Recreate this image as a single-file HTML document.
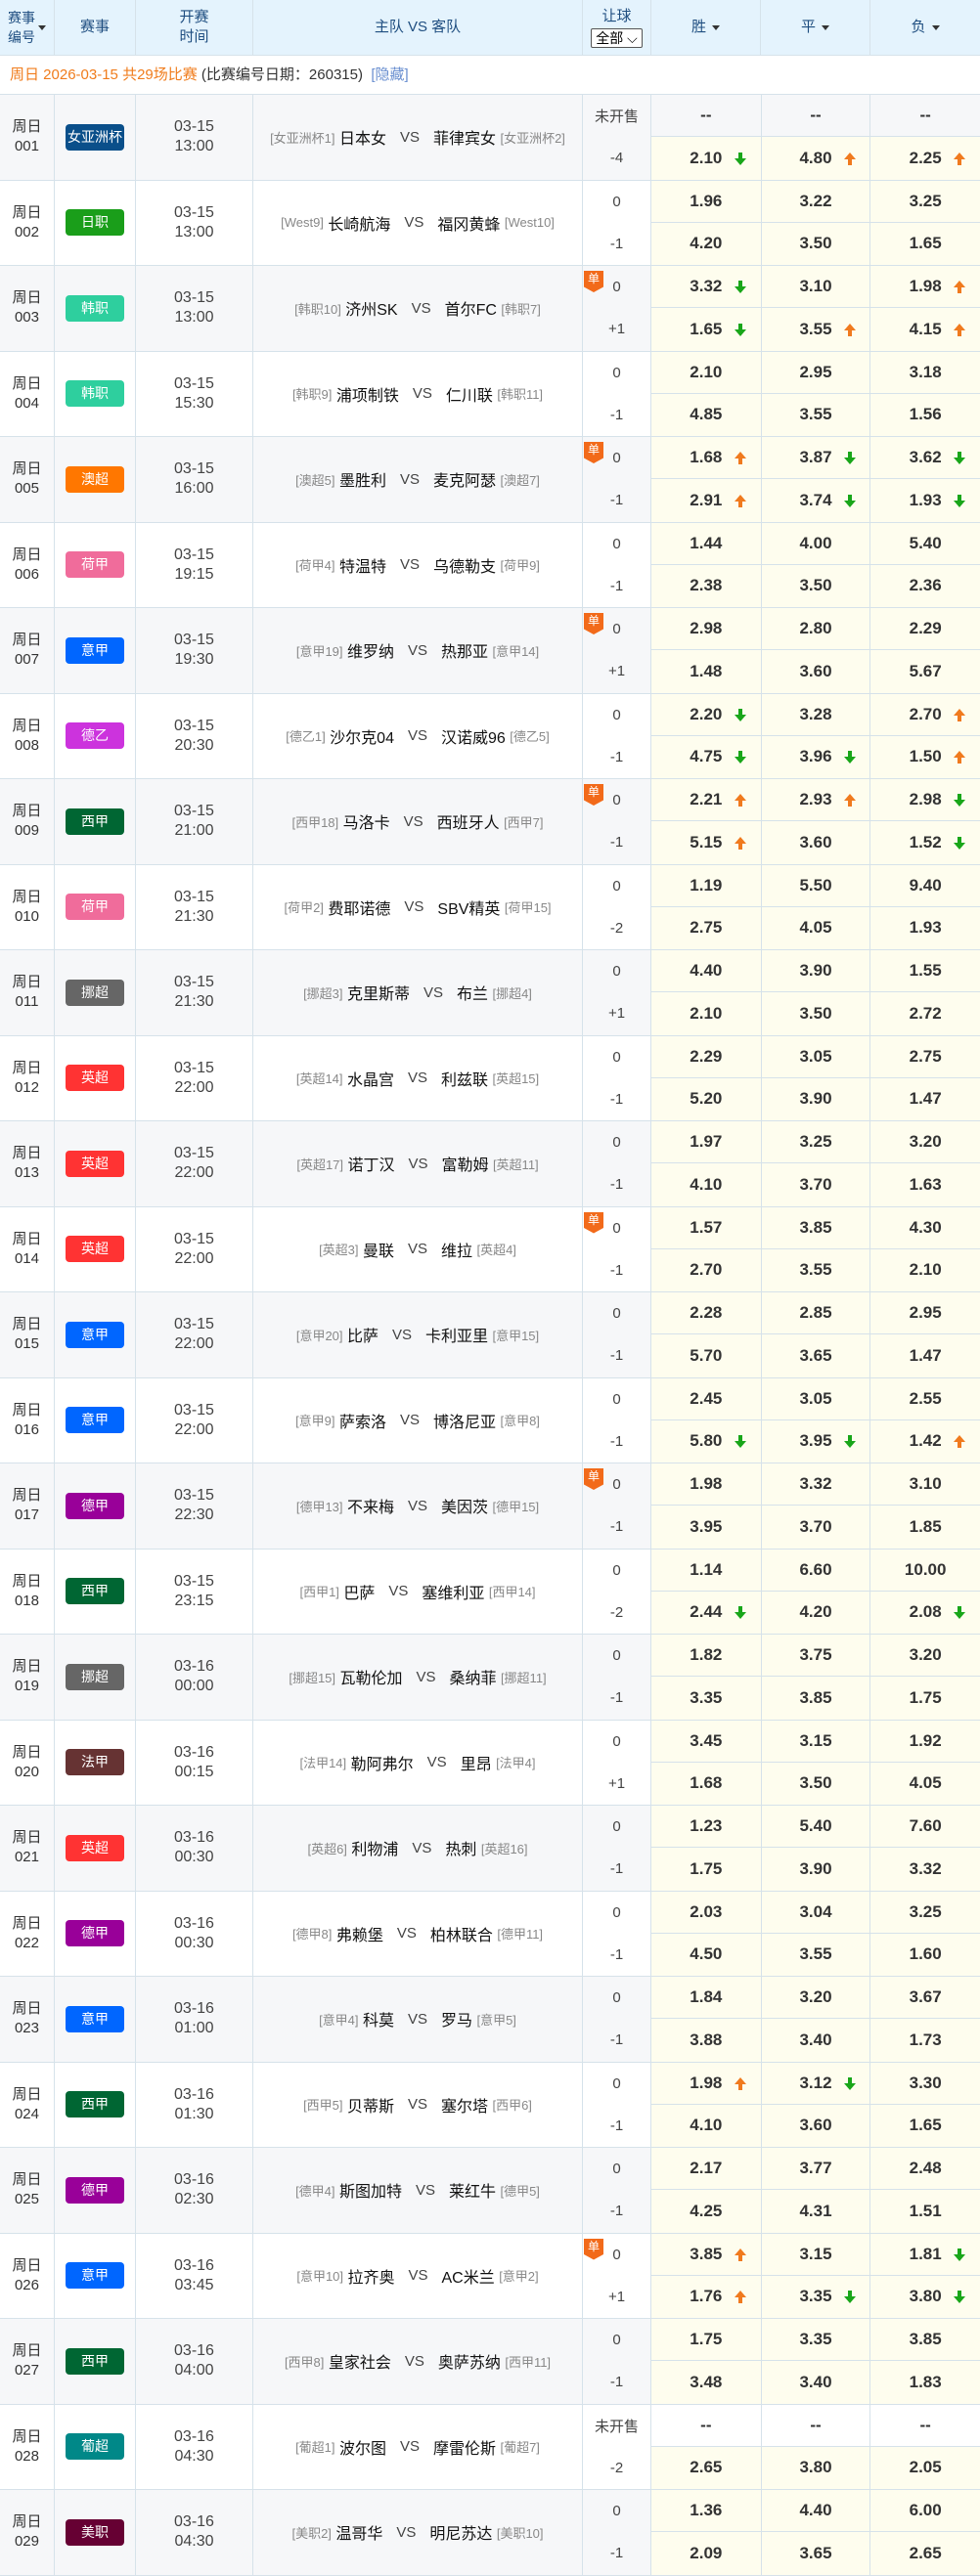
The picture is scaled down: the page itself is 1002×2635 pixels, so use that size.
<!DOCTYPE html>
<html><head><meta charset="utf-8">
<style>
*{box-sizing:border-box;margin:0;padding:0}
body{width:1002px;height:2635px;background:#fff;font-family:"Liberation Sans","Noto Sans CJK SC",sans-serif;color:#333;overflow:hidden}
.hd{display:flex;height:57px;background:#e4f3fd;color:#1f4e80;font-size:15px;border-bottom:1px solid #d6e2ea}
.hd>div{border-left:1px solid #d6e2ea;display:flex;align-items:center;justify-content:center;text-align:center;line-height:20px}
.hd>div:first-child{border-left:none}
.tri{display:inline-block;width:0;height:0;border-left:4px solid transparent;border-right:4px solid transparent;border-top:5px solid #333;margin-left:6px;vertical-align:middle}
.sel{display:inline-block;border:1px solid #555;border-radius:2px;background:#fff;color:#000;font-size:14px;line-height:18px;padding:0 4px;margin-top:2px}
.info{height:40px;border-bottom:1px solid #d6e2ea;font-size:15px;line-height:40px;padding-left:10px}
.m{display:flex;height:87.5px;border-bottom:1px solid #d6e2ea;background:#fff}
.m.g{background:#f6f7f9}
.m>div{border-left:1px solid #d6e2ea}
.m>div:first-child{border-left:none}
.c1{width:55px;display:flex;align-items:center;justify-content:center;text-align:center;font-size:15px;line-height:20px;color:#333}
.c2{width:83px;display:flex;align-items:center;justify-content:center}
.b{display:inline-block;width:60px;height:27px;line-height:27px;border-radius:4px;color:#fff;font-size:14px;text-align:center}
.c3{width:120px;display:flex;align-items:center;justify-content:center;text-align:center;font-size:16px;line-height:20px;color:#444}
.c4{width:337px;display:flex;align-items:center;justify-content:center;font-size:16px;color:#111;white-space:nowrap}
.c4 i{font-style:normal;color:#888;font-size:13px}
.c4 s{text-decoration:none;color:#444;font-size:15px;margin:0 14px}
.c5{width:70px;position:relative;font-size:15px;color:#444}
.c5>div{height:50%;display:flex;align-items:center;justify-content:center}
.dan{position:absolute;left:1px;top:5px;width:20px;height:22px;background:#f26a1a;color:#fff;font-size:12px;text-align:center;line-height:17px;clip-path:polygon(0 0,100% 0,100% 75%,50% 100%,0 75%)}
.o{width:337px;border-left:1px solid #d6e2ea}
.o>div{height:50%;display:flex;background:#fefdee}
.o>div:first-child{border-bottom:1px solid #d6e2ea}
.o>div.d{background:transparent}
.o b{position:relative;display:flex;align-items:center;justify-content:center;width:112px;font-size:17px;color:#333;border-left:1px solid #d6e2ea}
.o b:first-child{border-left:none}
.o b:last-child{width:113px}
.up,.dn{position:absolute;left:calc(50% + 29px);top:50%;width:12px;height:13px;margin-top:-6px}
.up::before,.dn::before{content:"";position:absolute;left:4px;width:4px;height:7px}
.up::after,.dn::after{content:"";position:absolute;left:0;width:0;height:0;border-left:6px solid transparent;border-right:6px solid transparent}
.dn::before{top:0;background:#19a619}.dn::after{top:6px;border-top:7px solid #19a619}
.up::before{bottom:0;background:#f07a1e}.up::after{bottom:6px;border-bottom:7px solid #f07a1e}
</style></head><body>
<div class="hd">
<div style="width:55px;font-size:14px"><span>赛事<br>编号</span><span class="tri" style="margin-left:3px"></span></div>
<div style="width:83px">赛事</div>
<div style="width:120px">开赛<br>时间</div>
<div style="width:337px">主队 VS 客队</div>
<div style="width:70px;flex-direction:column"><span>让球</span><span class="sel">全部 ⌵</span></div>
<div style="width:112px">胜<span class="tri"></span></div>
<div style="width:112px">平<span class="tri"></span></div>
<div style="width:113px">负<span class="tri"></span></div>
</div>
<div class="info"><span style="color:#f07c1c">周日 2026-03-15 共29场比赛</span> (比赛编号日期：260315) &nbsp;<span style="color:#6a8fd0">[隐藏]</span></div>

<div class="m g"><div class="c1">周日<br>001</div><div class="c2"><span class="b" style="background:#0a4f8a">女亚洲杯</span></div><div class="c3">03-15<br>13:00</div><div class="c4"><i>[女亚洲杯1]</i>&nbsp;日本女<s>VS</s>菲律宾女&nbsp;<i>[女亚洲杯2]</i></div><div class="c5"><div>未开售</div><div>-4</div></div><div class="o"><div class="d"><b>--</b><b>--</b><b>--</b></div><div><b>2.10<u class="dn"></u></b><b>4.80<u class="up"></u></b><b>2.25<u class="up"></u></b></div></div></div>

<div class="m"><div class="c1">周日<br>002</div><div class="c2"><span class="b" style="background:#1a9e1a">日职</span></div><div class="c3">03-15<br>13:00</div><div class="c4"><i>[West9]</i>&nbsp;长崎航海<s>VS</s>福冈黄蜂&nbsp;<i>[West10]</i></div><div class="c5"><div>0</div><div>-1</div></div><div class="o"><div><b>1.96</b><b>3.22</b><b>3.25</b></div><div><b>4.20</b><b>3.50</b><b>1.65</b></div></div></div>

<div class="m g"><div class="c1">周日<br>003</div><div class="c2"><span class="b" style="background:#2ecf9e">韩职</span></div><div class="c3">03-15<br>13:00</div><div class="c4"><i>[韩职10]</i>&nbsp;济州SK<s>VS</s>首尔FC&nbsp;<i>[韩职7]</i></div><div class="c5"><span class="dan">单</span><div>0</div><div>+1</div></div><div class="o"><div><b>3.32<u class="dn"></u></b><b>3.10</b><b>1.98<u class="up"></u></b></div><div><b>1.65<u class="dn"></u></b><b>3.55<u class="up"></u></b><b>4.15<u class="up"></u></b></div></div></div>

<div class="m"><div class="c1">周日<br>004</div><div class="c2"><span class="b" style="background:#2ecf9e">韩职</span></div><div class="c3">03-15<br>15:30</div><div class="c4"><i>[韩职9]</i>&nbsp;浦项制铁<s>VS</s>仁川联&nbsp;<i>[韩职11]</i></div><div class="c5"><div>0</div><div>-1</div></div><div class="o"><div><b>2.10</b><b>2.95</b><b>3.18</b></div><div><b>4.85</b><b>3.55</b><b>1.56</b></div></div></div>

<div class="m g"><div class="c1">周日<br>005</div><div class="c2"><span class="b" style="background:#ff7700">澳超</span></div><div class="c3">03-15<br>16:00</div><div class="c4"><i>[澳超5]</i>&nbsp;墨胜利<s>VS</s>麦克阿瑟&nbsp;<i>[澳超7]</i></div><div class="c5"><span class="dan">单</span><div>0</div><div>-1</div></div><div class="o"><div><b>1.68<u class="up"></u></b><b>3.87<u class="dn"></u></b><b>3.62<u class="dn"></u></b></div><div><b>2.91<u class="up"></u></b><b>3.74<u class="dn"></u></b><b>1.93<u class="dn"></u></b></div></div></div>

<div class="m"><div class="c1">周日<br>006</div><div class="c2"><span class="b" style="background:#f06c9b">荷甲</span></div><div class="c3">03-15<br>19:15</div><div class="c4"><i>[荷甲4]</i>&nbsp;特温特<s>VS</s>乌德勒支&nbsp;<i>[荷甲9]</i></div><div class="c5"><div>0</div><div>-1</div></div><div class="o"><div><b>1.44</b><b>4.00</b><b>5.40</b></div><div><b>2.38</b><b>3.50</b><b>2.36</b></div></div></div>

<div class="m g"><div class="c1">周日<br>007</div><div class="c2"><span class="b" style="background:#0066ff">意甲</span></div><div class="c3">03-15<br>19:30</div><div class="c4"><i>[意甲19]</i>&nbsp;维罗纳<s>VS</s>热那亚&nbsp;<i>[意甲14]</i></div><div class="c5"><span class="dan">单</span><div>0</div><div>+1</div></div><div class="o"><div><b>2.98</b><b>2.80</b><b>2.29</b></div><div><b>1.48</b><b>3.60</b><b>5.67</b></div></div></div>

<div class="m"><div class="c1">周日<br>008</div><div class="c2"><span class="b" style="background:#cc33dd">德乙</span></div><div class="c3">03-15<br>20:30</div><div class="c4"><i>[德乙1]</i>&nbsp;沙尔克04<s>VS</s>汉诺威96&nbsp;<i>[德乙5]</i></div><div class="c5"><div>0</div><div>-1</div></div><div class="o"><div><b>2.20<u class="dn"></u></b><b>3.28</b><b>2.70<u class="up"></u></b></div><div><b>4.75<u class="dn"></u></b><b>3.96<u class="dn"></u></b><b>1.50<u class="up"></u></b></div></div></div>

<div class="m g"><div class="c1">周日<br>009</div><div class="c2"><span class="b" style="background:#006633">西甲</span></div><div class="c3">03-15<br>21:00</div><div class="c4"><i>[西甲18]</i>&nbsp;马洛卡<s>VS</s>西班牙人&nbsp;<i>[西甲7]</i></div><div class="c5"><span class="dan">单</span><div>0</div><div>-1</div></div><div class="o"><div><b>2.21<u class="up"></u></b><b>2.93<u class="up"></u></b><b>2.98<u class="dn"></u></b></div><div><b>5.15<u class="up"></u></b><b>3.60</b><b>1.52<u class="dn"></u></b></div></div></div>

<div class="m"><div class="c1">周日<br>010</div><div class="c2"><span class="b" style="background:#f06c9b">荷甲</span></div><div class="c3">03-15<br>21:30</div><div class="c4"><i>[荷甲2]</i>&nbsp;费耶诺德<s>VS</s>SBV精英&nbsp;<i>[荷甲15]</i></div><div class="c5"><div>0</div><div>-2</div></div><div class="o"><div><b>1.19</b><b>5.50</b><b>9.40</b></div><div><b>2.75</b><b>4.05</b><b>1.93</b></div></div></div>

<div class="m g"><div class="c1">周日<br>011</div><div class="c2"><span class="b" style="background:#666">挪超</span></div><div class="c3">03-15<br>21:30</div><div class="c4"><i>[挪超3]</i>&nbsp;克里斯蒂<s>VS</s>布兰&nbsp;<i>[挪超4]</i></div><div class="c5"><div>0</div><div>+1</div></div><div class="o"><div><b>4.40</b><b>3.90</b><b>1.55</b></div><div><b>2.10</b><b>3.50</b><b>2.72</b></div></div></div>

<div class="m"><div class="c1">周日<br>012</div><div class="c2"><span class="b" style="background:#ff3333">英超</span></div><div class="c3">03-15<br>22:00</div><div class="c4"><i>[英超14]</i>&nbsp;水晶宫<s>VS</s>利兹联&nbsp;<i>[英超15]</i></div><div class="c5"><div>0</div><div>-1</div></div><div class="o"><div><b>2.29</b><b>3.05</b><b>2.75</b></div><div><b>5.20</b><b>3.90</b><b>1.47</b></div></div></div>

<div class="m g"><div class="c1">周日<br>013</div><div class="c2"><span class="b" style="background:#ff3333">英超</span></div><div class="c3">03-15<br>22:00</div><div class="c4"><i>[英超17]</i>&nbsp;诺丁汉<s>VS</s>富勒姆&nbsp;<i>[英超11]</i></div><div class="c5"><div>0</div><div>-1</div></div><div class="o"><div><b>1.97</b><b>3.25</b><b>3.20</b></div><div><b>4.10</b><b>3.70</b><b>1.63</b></div></div></div>

<div class="m"><div class="c1">周日<br>014</div><div class="c2"><span class="b" style="background:#ff3333">英超</span></div><div class="c3">03-15<br>22:00</div><div class="c4"><i>[英超3]</i>&nbsp;曼联<s>VS</s>维拉&nbsp;<i>[英超4]</i></div><div class="c5"><span class="dan">单</span><div>0</div><div>-1</div></div><div class="o"><div><b>1.57</b><b>3.85</b><b>4.30</b></div><div><b>2.70</b><b>3.55</b><b>2.10</b></div></div></div>

<div class="m g"><div class="c1">周日<br>015</div><div class="c2"><span class="b" style="background:#0066ff">意甲</span></div><div class="c3">03-15<br>22:00</div><div class="c4"><i>[意甲20]</i>&nbsp;比萨<s>VS</s>卡利亚里&nbsp;<i>[意甲15]</i></div><div class="c5"><div>0</div><div>-1</div></div><div class="o"><div><b>2.28</b><b>2.85</b><b>2.95</b></div><div><b>5.70</b><b>3.65</b><b>1.47</b></div></div></div>

<div class="m"><div class="c1">周日<br>016</div><div class="c2"><span class="b" style="background:#0066ff">意甲</span></div><div class="c3">03-15<br>22:00</div><div class="c4"><i>[意甲9]</i>&nbsp;萨索洛<s>VS</s>博洛尼亚&nbsp;<i>[意甲8]</i></div><div class="c5"><div>0</div><div>-1</div></div><div class="o"><div><b>2.45</b><b>3.05</b><b>2.55</b></div><div><b>5.80<u class="dn"></u></b><b>3.95<u class="dn"></u></b><b>1.42<u class="up"></u></b></div></div></div>

<div class="m g"><div class="c1">周日<br>017</div><div class="c2"><span class="b" style="background:#990099">德甲</span></div><div class="c3">03-15<br>22:30</div><div class="c4"><i>[德甲13]</i>&nbsp;不来梅<s>VS</s>美因茨&nbsp;<i>[德甲15]</i></div><div class="c5"><span class="dan">单</span><div>0</div><div>-1</div></div><div class="o"><div><b>1.98</b><b>3.32</b><b>3.10</b></div><div><b>3.95</b><b>3.70</b><b>1.85</b></div></div></div>

<div class="m"><div class="c1">周日<br>018</div><div class="c2"><span class="b" style="background:#006633">西甲</span></div><div class="c3">03-15<br>23:15</div><div class="c4"><i>[西甲1]</i>&nbsp;巴萨<s>VS</s>塞维利亚&nbsp;<i>[西甲14]</i></div><div class="c5"><div>0</div><div>-2</div></div><div class="o"><div><b>1.14</b><b>6.60</b><b>10.00</b></div><div><b>2.44<u class="dn"></u></b><b>4.20</b><b>2.08<u class="dn"></u></b></div></div></div>

<div class="m g"><div class="c1">周日<br>019</div><div class="c2"><span class="b" style="background:#666">挪超</span></div><div class="c3">03-16<br>00:00</div><div class="c4"><i>[挪超15]</i>&nbsp;瓦勒伦加<s>VS</s>桑纳菲&nbsp;<i>[挪超11]</i></div><div class="c5"><div>0</div><div>-1</div></div><div class="o"><div><b>1.82</b><b>3.75</b><b>3.20</b></div><div><b>3.35</b><b>3.85</b><b>1.75</b></div></div></div>

<div class="m"><div class="c1">周日<br>020</div><div class="c2"><span class="b" style="background:#663333">法甲</span></div><div class="c3">03-16<br>00:15</div><div class="c4"><i>[法甲14]</i>&nbsp;勒阿弗尔<s>VS</s>里昂&nbsp;<i>[法甲4]</i></div><div class="c5"><div>0</div><div>+1</div></div><div class="o"><div><b>3.45</b><b>3.15</b><b>1.92</b></div><div><b>1.68</b><b>3.50</b><b>4.05</b></div></div></div>

<div class="m g"><div class="c1">周日<br>021</div><div class="c2"><span class="b" style="background:#ff3333">英超</span></div><div class="c3">03-16<br>00:30</div><div class="c4"><i>[英超6]</i>&nbsp;利物浦<s>VS</s>热刺&nbsp;<i>[英超16]</i></div><div class="c5"><div>0</div><div>-1</div></div><div class="o"><div><b>1.23</b><b>5.40</b><b>7.60</b></div><div><b>1.75</b><b>3.90</b><b>3.32</b></div></div></div>

<div class="m"><div class="c1">周日<br>022</div><div class="c2"><span class="b" style="background:#990099">德甲</span></div><div class="c3">03-16<br>00:30</div><div class="c4"><i>[德甲8]</i>&nbsp;弗赖堡<s>VS</s>柏林联合&nbsp;<i>[德甲11]</i></div><div class="c5"><div>0</div><div>-1</div></div><div class="o"><div><b>2.03</b><b>3.04</b><b>3.25</b></div><div><b>4.50</b><b>3.55</b><b>1.60</b></div></div></div>

<div class="m g"><div class="c1">周日<br>023</div><div class="c2"><span class="b" style="background:#0066ff">意甲</span></div><div class="c3">03-16<br>01:00</div><div class="c4"><i>[意甲4]</i>&nbsp;科莫<s>VS</s>罗马&nbsp;<i>[意甲5]</i></div><div class="c5"><div>0</div><div>-1</div></div><div class="o"><div><b>1.84</b><b>3.20</b><b>3.67</b></div><div><b>3.88</b><b>3.40</b><b>1.73</b></div></div></div>

<div class="m"><div class="c1">周日<br>024</div><div class="c2"><span class="b" style="background:#006633">西甲</span></div><div class="c3">03-16<br>01:30</div><div class="c4"><i>[西甲5]</i>&nbsp;贝蒂斯<s>VS</s>塞尔塔&nbsp;<i>[西甲6]</i></div><div class="c5"><div>0</div><div>-1</div></div><div class="o"><div><b>1.98<u class="up"></u></b><b>3.12<u class="dn"></u></b><b>3.30</b></div><div><b>4.10</b><b>3.60</b><b>1.65</b></div></div></div>

<div class="m g"><div class="c1">周日<br>025</div><div class="c2"><span class="b" style="background:#990099">德甲</span></div><div class="c3">03-16<br>02:30</div><div class="c4"><i>[德甲4]</i>&nbsp;斯图加特<s>VS</s>莱红牛&nbsp;<i>[德甲5]</i></div><div class="c5"><div>0</div><div>-1</div></div><div class="o"><div><b>2.17</b><b>3.77</b><b>2.48</b></div><div><b>4.25</b><b>4.31</b><b>1.51</b></div></div></div>

<div class="m"><div class="c1">周日<br>026</div><div class="c2"><span class="b" style="background:#0066ff">意甲</span></div><div class="c3">03-16<br>03:45</div><div class="c4"><i>[意甲10]</i>&nbsp;拉齐奥<s>VS</s>AC米兰&nbsp;<i>[意甲2]</i></div><div class="c5"><span class="dan">单</span><div>0</div><div>+1</div></div><div class="o"><div><b>3.85<u class="up"></u></b><b>3.15</b><b>1.81<u class="dn"></u></b></div><div><b>1.76<u class="up"></u></b><b>3.35<u class="dn"></u></b><b>3.80<u class="dn"></u></b></div></div></div>

<div class="m g"><div class="c1">周日<br>027</div><div class="c2"><span class="b" style="background:#006633">西甲</span></div><div class="c3">03-16<br>04:00</div><div class="c4"><i>[西甲8]</i>&nbsp;皇家社会<s>VS</s>奥萨苏纳&nbsp;<i>[西甲11]</i></div><div class="c5"><div>0</div><div>-1</div></div><div class="o"><div><b>1.75</b><b>3.35</b><b>3.85</b></div><div><b>3.48</b><b>3.40</b><b>1.83</b></div></div></div>

<div class="m"><div class="c1">周日<br>028</div><div class="c2"><span class="b" style="background:#008888">葡超</span></div><div class="c3">03-16<br>04:30</div><div class="c4"><i>[葡超1]</i>&nbsp;波尔图<s>VS</s>摩雷伦斯&nbsp;<i>[葡超7]</i></div><div class="c5"><div>未开售</div><div>-2</div></div><div class="o"><div class="d"><b>--</b><b>--</b><b>--</b></div><div><b>2.65</b><b>3.80</b><b>2.05</b></div></div></div>

<div class="m g"><div class="c1">周日<br>029</div><div class="c2"><span class="b" style="background:#660033">美职</span></div><div class="c3">03-16<br>04:30</div><div class="c4"><i>[美职2]</i>&nbsp;温哥华<s>VS</s>明尼苏达&nbsp;<i>[美职10]</i></div><div class="c5"><div>0</div><div>-1</div></div><div class="o"><div><b>1.36</b><b>4.40</b><b>6.00</b></div><div><b>2.09</b><b>3.65</b><b>2.65</b></div></div></div>
</body></html>
